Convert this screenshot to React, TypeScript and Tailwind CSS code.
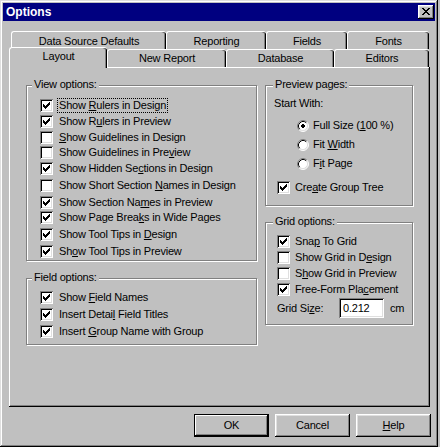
import type { ReactNode } from "react";

const raised =
  "shadow-[inset_-1px_-1px_#000,inset_1px_1px_#fff,inset_-2px_-2px_#808080,inset_2px_2px_#dfdfdf]";
const sunken =
  "shadow-[inset_1px_1px_#808080,inset_-1px_-1px_#fff,inset_2px_2px_#000,inset_-2px_-2px_#dfdfdf]";
const etched = "relative border border-[#808080] shadow-[inset_1px_1px_#fff,1px_1px_#fff]";

type Txt = [string, string, string];

const CheckMark = () => (
  <svg width="7" height="7" viewBox="0 0 7 7" shapeRendering="crispEdges">
    <path d="M0 2h1v3H0z M1 3h1v3H1z M2 4h1v3H2z M3 3h1v3H3z M4 2h1v3H4z M5 1h1v3H5z M6 0h1v3H6z" fill="#000" />
  </svg>
);

const Check = ({ checked }: { checked: boolean }) => (
  <span className={`w-[13px] h-[13px] shrink-0 bg-white flex items-center justify-center ${sunken}`}>
    {checked && <CheckMark />}
  </span>
);

const Radio = ({ on }: { on: boolean }) => (
  <svg width="12" height="12" viewBox="0 0 12 12" className="shrink-0">
    <circle cx="6" cy="6" r="5" fill="#fff" />
    <path d="M2.11 9.89 A5.5 5.5 0 0 1 9.89 2.11" stroke="#808080" fill="none" />
    <path d="M9.89 2.11 A5.5 5.5 0 0 1 2.11 9.89" stroke="#fff" fill="none" />
    <path d="M2.82 9.18 A4.5 4.5 0 0 1 9.18 2.82" stroke="#000" fill="none" />
    <path d="M9.18 2.82 A4.5 4.5 0 0 1 2.82 9.18" stroke="#dfdfdf" fill="none" />
    {on && <path d="M5 4h2v1H5z M4 5h4v2H4z M5 7h2v1H5z" fill="#000" shapeRendering="crispEdges" />}
  </svg>
);

const Label = ({ t, focus = false, className = "ml-[4px]" }: { t: Txt; focus?: boolean; className?: string }) => (
  <span
    className={`${className} px-[1px] leading-[13px] whitespace-nowrap border border-dotted ${
      focus ? "border-black" : "border-transparent"
    }`}
  >
    {t[0]}
    <u className="underline-offset-[1px]">{t[1]}</u>
    {t[2]}
  </span>
);

const Tab = ({ label, className }: { label: string; className: string }) => (
  <div
    className={`flex items-center justify-center bg-[#c0c0c0] border-l border-t border-white rounded-t-[3px] shadow-[inset_-1px_0_#000,inset_-2px_0_#808080] ${className}`}
  >
    {label}
  </div>
);

const GroupLabel = ({ children, className }: { children: ReactNode; className: string }) => (
  <span className={`absolute top-[-8px] px-[2px] bg-[#c0c0c0] leading-[13px] ${className}`}>{children}</span>
);

const viewRows: { c: boolean; h: string; t: Txt; focus?: boolean }[] = [
  { c: true, h: "h-[16px]", t: ["Show ", "R", "ulers in Design"], focus: true },
  { c: true, h: "h-[16px]", t: ["Show R", "u", "lers in Preview"] },
  { c: false, h: "h-[16px]", t: ["", "S", "how Guidelines in Design"] },
  { c: false, h: "h-[15px]", t: ["Show Guidelines in Pre", "v", "iew"] },
  { c: true, h: "h-[17px]", t: ["Show Hidden Se", "c", "tions in Design"] },
  { c: false, h: "h-[17px]", t: ["Show Short Section ", "N", "ames in Design"] },
  { c: true, h: "h-[16px]", t: ["Show Section Na", "m", "es in Preview"] },
  { c: true, h: "h-[15px]", t: ["Show Page Brea", "k", "s in Wide Pages"] },
  { c: true, h: "h-[18px]", t: ["Show Tool Tips in ", "D", "esign"] },
  { c: true, h: "h-[16px]", t: ["Sh", "o", "w Tool Tips in Preview"] },
];

const fieldRows: { h: string; t: Txt }[] = [
  { h: "h-[18px]", t: ["Show ", "F", "ield Names"] },
  { h: "h-[17px]", t: ["Insert Detai", "l", " Field Titles"] },
  { h: "h-[17px]", t: ["Insert ", "G", "roup Name with Group"] },
];

const gridRows: { c: boolean; t: Txt }[] = [
  { c: true, t: ["Sna", "p", " To Grid"] },
  { c: false, t: ["Show Grid in D", "e", "sign"] },
  { c: false, t: ["S", "h", "ow Grid in Preview"] },
  { c: true, t: ["Free-Form Pla", "c", "ement"] },
];

const radios: { on: boolean; t: Txt }[] = [
  { on: true, t: ["Full Size (", "1", "00 %)"] },
  { on: false, t: ["Fit ", "W", "idth"] },
  { on: false, t: ["F", "i", "t Page"] },
];

export default function App() {
  return (
    <div className="w-[440px] h-[447px] bg-[#c0c0c0] text-black text-[11px] tracking-[-0.2px] font-['Liberation_Sans',Arial,sans-serif]">
      <div
        className={`w-[438px] h-[447px] p-[3px] flex flex-col shadow-[inset_-1px_-1px_#000,inset_1px_1px_#dfdfdf,inset_-2px_-2px_#808080,inset_2px_2px_#fff]`}
      >
        {/* title bar */}
        <div className="h-[18px] bg-[#000080] flex items-center justify-between pl-[3px] pr-[1px]">
          <span className="text-white font-bold text-[12px] leading-[14px] tracking-normal">Options</span>
          <button className={`w-[16px] h-[14px] bg-[#c0c0c0] flex items-center justify-center ${raised}`}>
            <svg width="8" height="7" viewBox="0 0 8 7" shapeRendering="crispEdges" className="-mt-[1px]">
              <path
                d="M0 0h2v1H0z M6 0h2v1H6z M1 1h2v1H1z M5 1h2v1H5z M2 2h4v1H2z M3 3h2v1H3z M2 4h4v1H2z M1 5h2v1H1z M5 5h2v1H5z M0 6h2v1H0z M6 6h2v1H6z"
                fill="#000"
              />
            </svg>
          </button>
        </div>

        <div className="pl-[6px] pt-[10px]">
          {/* tabs */}
          <div className="flex ml-[2px] h-[18px]">
            <Tab label="Data Source Defaults" className="w-[155px] h-[18px] pt-[1px]" />
            <Tab label="Reporting" className="w-[100px] h-[18px] pt-[1px]" />
            <Tab label="Fields" className="w-[81px] h-[18px] pt-[1px]" />
            <Tab label="Fonts" className="w-[82px] h-[18px] pt-[1px]" />
          </div>
          <div className="flex h-[18px]">
            <Tab label="Layout" className="w-[98px] h-[21px] -mt-[2px] pb-[4px] relative z-10" />
            <Tab label="New Report" className="w-[119px] h-[18px]" />
            <Tab label="Database" className="w-[108px] h-[18px]" />
            <Tab label="Editors" className="w-[95px] h-[18px]" />
          </div>

          {/* panel */}
          <div
            className={`w-[421px] h-[340px] pt-[18px] pl-[17px] flex gap-[8px] shadow-[inset_-1px_-1px_#000,inset_1px_1px_#fff,inset_-2px_-2px_#808080]`}
          >
            <div className="w-[231px] flex flex-col gap-[17px]">
              <div className={`${etched} h-[176px] pt-[11px] pl-[13px]`}>
                <GroupLabel className="left-[5px]">View options:</GroupLabel>
                {viewRows.map((r, i) => (
                  <div key={i} className={`flex items-center ${r.h}`}>
                    <Check checked={r.c} />
                    <Label t={r.t} focus={r.focus} />
                  </div>
                ))}
              </div>
              <div className={`${etched} h-[67px] pt-[9px] pl-[13px]`}>
                <GroupLabel className="left-[5px]">Field options:</GroupLabel>
                {fieldRows.map((r, i) => (
                  <div key={i} className={`flex items-center ${r.h}`}>
                    <Check checked />
                    <Label t={r.t} />
                  </div>
                ))}
              </div>
            </div>

            <div className="w-[148px] flex flex-col gap-[16px]">
              <div className={`${etched} h-[121px] pt-[9px] pl-[8px]`}>
                <GroupLabel className="left-[7px]">Preview pages:</GroupLabel>
                <div className="h-[16px] flex items-center leading-[13px]">Start With:</div>
                <div className="mt-[5px] ml-[23px]">
                  {radios.map((r, i) => (
                    <div key={i} className="h-[19px] flex items-center">
                      <Radio on={r.on} />
                      <Label t={r.t} className="ml-[2px]" />
                    </div>
                  ))}
                </div>
                <div className="mt-[6px] ml-[3px] h-[16px] flex items-center">
                  <Check checked />
                  <Label t={["Cre", "a", "te Group Tree"]} className="ml-[3px]" />
                </div>
              </div>

              <div className={`${etched} h-[103px] pt-[10px] pl-[11px]`}>
                <GroupLabel className="left-[7px]">Grid options:</GroupLabel>
                {gridRows.map((r, i) => (
                  <div key={i} className="h-[16px] flex items-center">
                    <Check checked={r.c} />
                    <Label t={r.t} className="ml-[3px]" />
                  </div>
                ))}
                <div className="mt-[1px] h-[20px] flex items-center">
                  <span className="w-[62px] leading-[13px]">
                    Grid Si<u className="underline-offset-[1px]">z</u>e:
                  </span>
                  <div className={`w-[45px] h-[20px] bg-white flex items-center pl-[4px] ${sunken}`}>0.212</div>
                  <span className="ml-[6px] leading-[13px]">cm</span>
                </div>
              </div>
            </div>
          </div>

          {/* buttons */}
          <div className="w-[422px] mt-[7px] flex justify-end gap-[6px]">
            <button className="w-[75px] h-[23px] border border-black flex items-center justify-center shadow-[inset_-1px_-1px_#000,inset_1px_1px_#fff,inset_-2px_-2px_#808080]">
              OK
            </button>
            <button className={`w-[75px] h-[23px] flex items-center justify-center ${raised}`}>Cancel</button>
            <button className={`w-[75px] h-[23px] flex items-center justify-center ${raised}`}>
              <u className="underline-offset-[1px]">H</u>elp
            </button>
          </div>
        </div>
      </div>
    </div>
  );
}
